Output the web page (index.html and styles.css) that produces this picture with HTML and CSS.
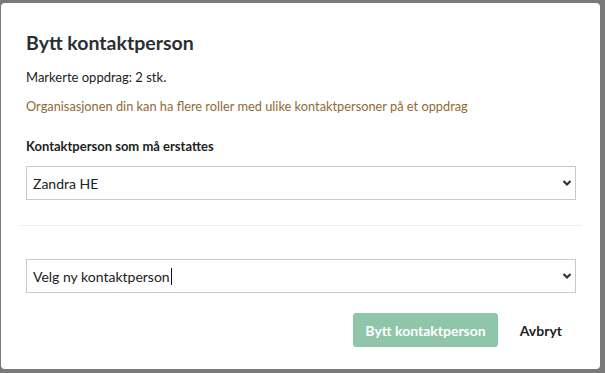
FILE: index.html
```html
<!DOCTYPE html>
<html lang="no">
<head>
  <meta charset="UTF-8">
  <title>Bytt kontaktperson</title>
  <link rel="stylesheet" href="styles.css">
</head>
<body>
  <div class="modal">
    <h2>Bytt kontaktperson</h2>
    <p class="count">Markerte oppdrag: 2 stk.</p>
    <p class="note">Organisasjonen din kan ha flere roller med ulike kontaktpersoner på et oppdrag</p>

    <label>Kontaktperson som må erstattes</label>
    <div class="select">
      <span>Zandra HE</span>
      <svg class="chevron" width="10" height="8" viewBox="0 0 10 8"><path d="M1.5 2 L5 5.5 L8.5 2" fill="none" stroke="#333" stroke-width="2.2"/></svg>
    </div>

    <hr class="divider">

    <div class="select">
      <span>Velg ny kontaktperson</span><span class="caret"></span>
      <svg class="chevron" width="10" height="8" viewBox="0 0 10 8"><path d="M1.5 2 L5 5.5 L8.5 2" fill="none" stroke="#333" stroke-width="2.2"/></svg>
    </div>

    <div class="actions">
      <button type="button" class="primary" disabled>Bytt kontaktperson</button>
      <button type="button" class="link">Avbryt</button>
    </div>
  </div>
</body>
</html>
```

FILE: styles.css
```css
body {
  margin: 0;
  background-color: #7a7a7a;
  font-family: Lato, "Open Sans", sans-serif;
  color: #333;
  padding: 3px 0 0 1px;
  height: 370px;
  box-sizing: border-box;
}
.modal {
  background-color: white;
  width: 599px;
  height: 366px;
  box-sizing: border-box;
  border-radius: 4px;
  padding: 28px 24px 0 25px;
}
h2 {
  margin: 0 0 12px;
  font-size: 19.5px;
  line-height: 24px;
  font-weight: 700;
  color: #2b2f33;
}
p {
  margin: 0;
  font-size: 13px;
  line-height: 20px;
}
.count {
  margin-bottom: 9px;
  color: #222;
}
.note {
  font-size: 12.8px;
  color: #8f6a37;
  margin-bottom: 20px;
}
label {
  display: block;
  font-size: 13px;
  line-height: 20px;
  font-weight: 700;
  color: #222;
  margin-bottom: 10px;
}
.select {
  position: relative;
  display: flex;
  align-items: center;
  height: 34px;
  box-sizing: border-box;
  border: 1px solid #c8c8c8;
  padding: 0 6px;
  font-size: 14px;
  color: #222;
}
.chevron {
  position: absolute;
  right: 3px;
  top: 12px;
}
.caret {
  display: inline-block;
  width: 1px;
  height: 17px;
  background-color: #111;
  margin-left: 1px;
}
.divider {
  border: none;
  border-top: 1px solid #eee;
  margin: 25px -6px 33px -6px;
}
.actions {
  display: flex;
  justify-content: flex-end;
  gap: 8px;
  margin-top: 20px;
}
button {
  font-family: inherit;
  font-size: 14px;
  font-weight: 700;
  height: 34px;
  border-radius: 3px;
  cursor: pointer;
}
button.primary {
  background-color: #8fc6a9;
  border: 1px solid #8fc6a9;
  color: white;
  padding: 0 11px;
}
button.link {
  background: none;
  border: none;
  color: #222;
  padding: 0 14px;
}
```
